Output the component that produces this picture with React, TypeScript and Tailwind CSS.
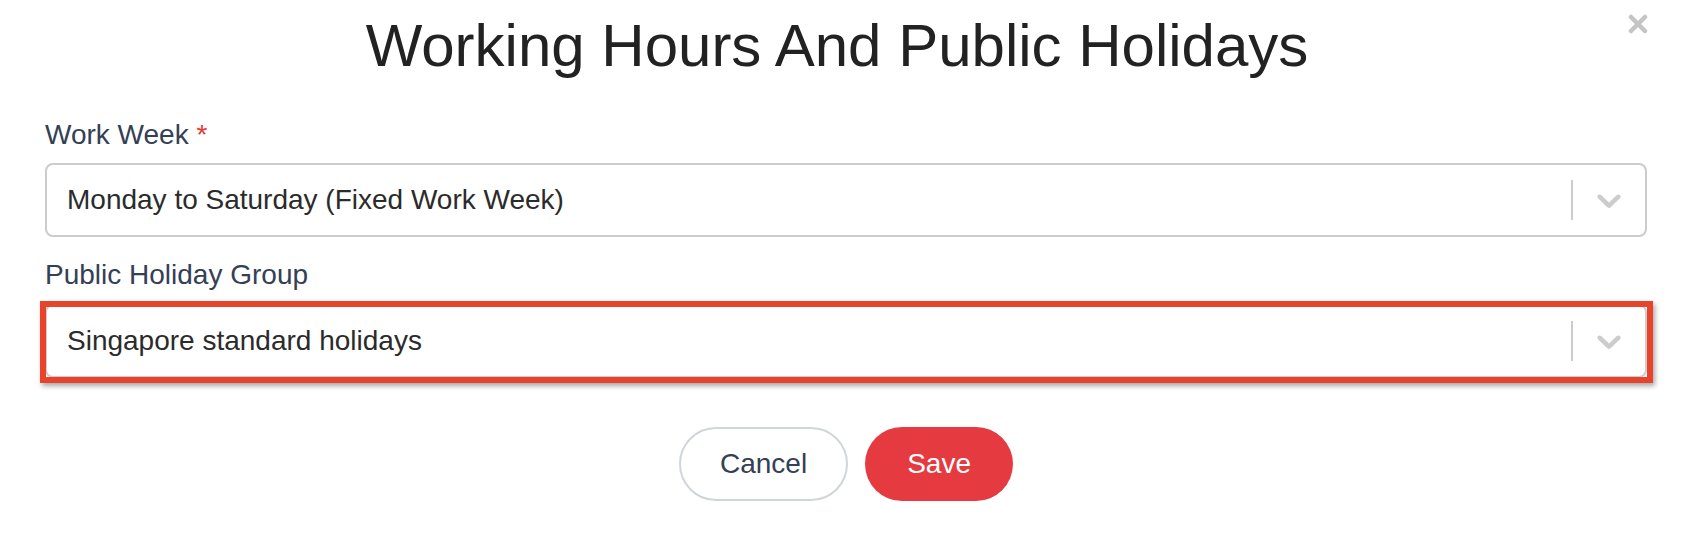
function Chevron() {
  return (
    <svg width="40" height="40" viewBox="0 0 20 20" fill="#cccccc" aria-hidden="true">
      <path d="M4.516 7.548c0.436-0.446 1.043-0.481 1.576 0l3.908 3.747 3.908-3.747c0.533-0.481 1.141-0.446 1.574 0 0.436 0.445 0.408 1.197 0 1.615-0.406 0.418-4.695 4.502-4.695 4.502-0.217 0.223-0.502 0.335-0.787 0.335s-0.57-0.112-0.789-0.335c0 0-4.287-4.084-4.695-4.502s-0.436-1.17 0-1.615z" />
    </svg>
  );
}

function CloseIcon() {
  return (
    <svg width="20" height="20" viewBox="0 0 20 20" fill="none" stroke="#c4c4c4" strokeWidth="4.5" strokeLinecap="round" aria-hidden="true">
      <path d="M3 3l14 14M17 3L3 17" />
    </svg>
  );
}

function Select({ value }: { value: string }) {
  return (
    <div className="flex h-[74px] items-center rounded-[8px] border-2 border-[#cccccc] bg-white">
      <span className="flex-1 pl-[20px] text-[28px] text-[#2b2b2b]">{value}</span>
      <div className="h-[40px] w-[2px] bg-[#cccccc]" />
      <div className="flex w-[72px] items-center justify-center">
        <Chevron />
      </div>
    </div>
  );
}

export default function App() {
  return (
    <div className="relative min-h-[559px] bg-white pl-[45px] pr-[42px] pt-[10px] font-['Liberation_Sans',Arial,sans-serif]">
      <button className="absolute right-[41px] top-[14px]">
        <CloseIcon />
      </button>

      <h1 className="pr-[18px] text-center text-[60px] leading-[72px] text-[#222222]">
        Working Hours And Public Holidays
      </h1>

      {/* Work week */}
      <label className="mt-[36px] block text-[28px] leading-[34px] text-[#344054]">
        Work Week <span className="text-[#e53935]">*</span>
      </label>
      <div className="mt-[11px]">
        <Select value="Monday to Saturday (Fixed Work Week)" />
      </div>

      {/* Public holidays */}
      <label className="mt-[21px] block text-[28px] leading-[34px] text-[#344054]">
        Public Holiday Group
      </label>
      <div className="relative mt-[12px]">
        <Select value="Singapore standard holidays" />
        <div className="pointer-events-none absolute -bottom-[5px] -left-[5px] -right-[6px] -top-[3px] border-[6px] border-[#e8432b] shadow-[2px_3px_5px_rgba(0,0,0,0.35)]" />
      </div>

      <div className="mt-[49px] flex justify-center gap-[17px]">
        <button className="h-[74px] rounded-full border-2 border-[#d0d5dd] bg-white px-[39px] text-[28px] text-[#344054]">
          Cancel
        </button>
        <button className="h-[74px] rounded-full bg-[#e53a40] px-[42px] text-[28px] text-white">
          Save
        </button>
      </div>
    </div>
  );
}
